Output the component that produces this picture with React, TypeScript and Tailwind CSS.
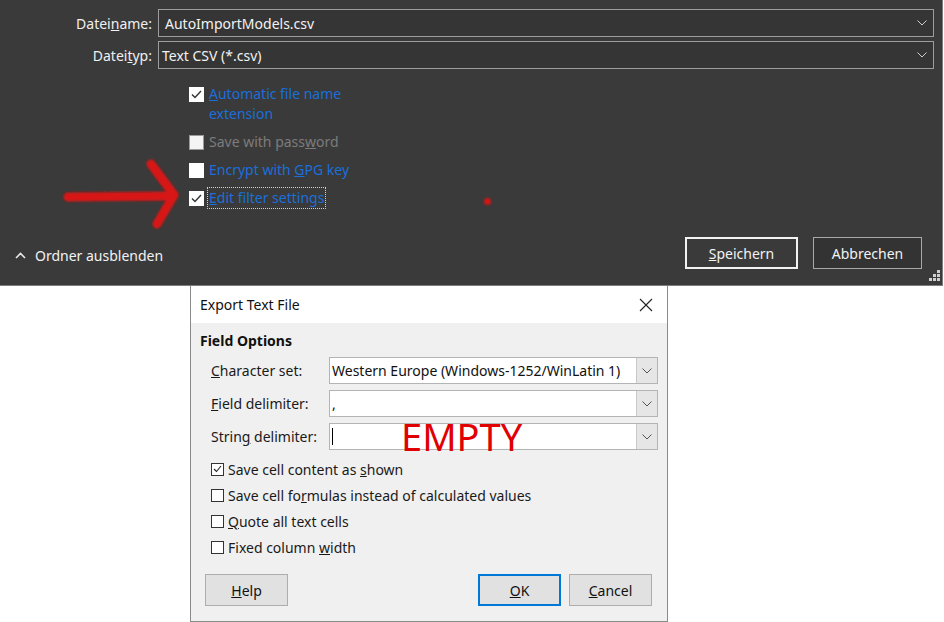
import React from 'react';

const font = { fontFamily: '"Noto Sans", "Liberation Sans", sans-serif' };

function Chevron({ className }: { className?: string }) {
  return (
    <svg width="10" height="6" viewBox="0 0 10 6" className={className}>
      <path d="M0.5 0.5 L5 5 L9.5 0.5" fill="none" stroke="currentColor" strokeWidth="1" />
    </svg>
  );
}

function DarkCheck({ checked, disabled }: { checked?: boolean; disabled?: boolean }) {
  return (
    <span
      className={`mt-[3px] flex h-[15px] w-[15px] shrink-0 items-center justify-center ${
        disabled ? 'border border-[#9a9a9a] bg-[#f4f4f4]' : 'bg-white'
      }`}
    >
      {checked && (
        <svg width="11" height="9" viewBox="0 0 11 9">
          <path d="M1 4.5 L4 7.5 L10 1" fill="none" stroke="#333" strokeWidth="1.4" />
        </svg>
      )}
    </span>
  );
}

function DarkField({ label, value, textPad }: { label: [string, string, string]; value: string; textPad: string }) {
  return (
    <div className="flex items-center">
      <div className="w-[158px] pr-[6px] text-right text-[14px] text-[#f0f0f0]">
        {label[0]}
        <u>{label[1]}</u>
        {label[2]}:
      </div>
      <div className="mr-[8px] flex h-[28px] flex-1 items-center border border-[#9d9d9d] bg-[#353535]">
        <span className={`${textPad} flex-1 text-[14px] text-[#f2f2f2]`}>{value}</span>
        <Chevron className="mr-[6px] text-[#cfcfcf]" />
      </div>
    </div>
  );
}

function DlgCheck({ checked, children }: { checked?: boolean; children: React.ReactNode }) {
  return (
    <div className="flex h-[26px] items-center gap-[4px] text-[14px] text-[#1a1a1a]">
      <span className="flex h-[13px] w-[13px] items-center justify-center border border-[#333] bg-white">
        {checked && (
          <svg width="9" height="8" viewBox="0 0 9 8">
            <path d="M1 4 L3.5 6.5 L8 1" fill="none" stroke="#222" strokeWidth="1.1" />
          </svg>
        )}
      </span>
      <span>{children}</span>
    </div>
  );
}

function Combo({ label, value, cursor }: { label: React.ReactNode; value?: string; cursor?: boolean }) {
  return (
    <div className="flex items-center">
      <div className="w-[129px] shrink-0 whitespace-nowrap pl-[11px] text-[14px] text-[#1a1a1a]">{label}</div>
      <div className="flex h-[27px] w-[329px] items-stretch border border-[#b4b4b4] bg-white">
        <div className="relative flex flex-1 items-center pl-[2px] text-[14px] text-[#111]">
          {value}
          {cursor && <span className="h-[17px] w-px bg-black" />}
        </div>
        <div className="flex w-[21px] items-center justify-center border-l border-[#c8c8c8] bg-[#e6e6e6]">
          <Chevron className="text-[#555]" />
        </div>
      </div>
    </div>
  );
}

function DlgButton({ children, primary }: { children: React.ReactNode; primary?: boolean }) {
  return (
    <div
      className={`flex h-[32px] w-[83px] items-center justify-center bg-[#e1e1e1] text-[14px] text-[#111] ${
        primary ? 'border-2 border-[#0078d7]' : 'border border-[#adadad]'
      }`}
    >
      {children}
    </div>
  );
}

export default function App() {
  return (
    <div className="relative h-[622px] w-[944px] overflow-hidden bg-white" style={font}>
      {/* Save dialog (dark) */}
      <div className="flex h-[286px] w-[943px] flex-col border-b border-r border-[#7d7d7d] bg-[#3a3a3a]">
        <div className="flex flex-col gap-[4px] pt-[9px]">
          <DarkField label={['Datei', 'n', 'ame']} value="AutoImportModels.csv" textPad="pl-[6px]" />
          <DarkField label={['Datei', 't', 'yp']} value="Text CSV (*.csv)" textPad="pl-[3px]" />
        </div>

        <div className="mt-[15px] flex flex-col gap-[8px] pl-[189px] text-[14px] leading-[20px]">
          <div className="flex items-start gap-[5px]">
            <DarkCheck checked />
            <span className="w-[140px] text-[#1b6fd9]">
              <u>A</u>utomatic file name extension
            </span>
          </div>
          <div className="flex items-start gap-[5px]">
            <DarkCheck disabled />
            <span className="text-[#7c7c7c]">
              Save with pass<u>w</u>ord
            </span>
          </div>
          <div className="flex items-start gap-[5px]">
            <DarkCheck />
            <span className="text-[#1b6fd9]">
              Encrypt with <u>G</u>PG key
            </span>
          </div>
          <div className="flex items-start gap-[4px]">
            <DarkCheck checked />
            <span className="px-px text-[#1b6fd9] outline-1 outline-dotted outline-[#d0d0d0]">
              <u>E</u>dit filter settings
            </span>
          </div>
        </div>

        <div className="mt-auto flex items-center pb-[16px] pl-[15px] pr-[20px]">
          <svg width="11" height="7" viewBox="0 0 11 7" className="mt-[4px]">
            <path d="M1 6 L5.5 1.5 L10 6" fill="none" stroke="#e8e8e8" strokeWidth="1.6" />
          </svg>
          <span className="ml-[9px] mt-[5px] text-[14px] text-[#f2f2f2]">Ordner ausblenden</span>
          <div className="ml-auto flex gap-[15px]">
            <div className="flex h-[32px] w-[113px] items-center justify-center border-2 border-[#f2f2f2] text-[14px] text-[#f2f2f2]">
              <span>
                <u>S</u>peichern
              </span>
            </div>
            <div className="flex h-[32px] w-[109px] items-center justify-center border border-[#a8a8a8] bg-[#333] text-[14px] text-[#f2f2f2]">
              Abbrechen
            </div>
          </div>
        </div>
      </div>

      {/* resize grip */}
      <svg className="absolute left-[929px] top-[270px]" width="12" height="12" viewBox="0 0 12 12">
        {[
          [8, 0],
          [4, 4],
          [8, 4],
          [0, 8],
          [4, 8],
          [8, 8],
        ].map(([x, y]) => (
          <rect key={`${x}-${y}`} x={x} y={y} width="3" height="3" fill="#cfcfcf" />
        ))}
      </svg>

      {/* red annotation arrow */}
      <svg className="absolute left-0 top-[150px]" width="200" height="90" viewBox="0 0 200 90">
        <defs>
          <filter id="soft" x="-10%" y="-10%" width="120%" height="120%">
            <feGaussianBlur stdDeviation="0.9" />
          </filter>
        </defs>
        <g stroke="#d81414" strokeWidth="9" strokeLinecap="round" fill="none" filter="url(#soft)">
          <path d="M68 47 L173 46" />
          <path d="M151 14 L174 45 L157 74" strokeLinejoin="round" />
        </g>
      </svg>
      <span className="absolute left-[484px] top-[198px] h-[7px] w-[7px] rounded-full bg-[#d81414] blur-[1px]" />

      {/* Export Text File dialog */}
      <div className="ml-[190px] flex h-[336px] w-[478px] flex-col border-x border-b border-[#8a8a8a] bg-[#f0f0f0]">
        <div className="flex h-[37px] items-center justify-between bg-white pl-[9px] pr-[14px]">
          <span className="text-[14px] text-[#111]">Export Text File</span>
          <svg width="14" height="14" viewBox="0 0 14 14">
            <path d="M1 1 L13 13 M13 1 L1 13" stroke="#222" strokeWidth="1.1" />
          </svg>
        </div>
        <div className="pl-[9px] pt-[7px]">
          <div className="text-[14px] font-bold text-[#111]">Field Options</div>
          <div className="relative mt-[6px] flex flex-col gap-[6px]">
            <Combo
              label={
                <>
                  <u>C</u>haracter set:
                </>
              }
              value="Western Europe (Windows-1252/WinLatin 1)"
            />
            <Combo
              label={
                <>
                  <u>F</u>ield delimiter:
                </>
              }
              value=","
            />
            <Combo
              label={
                <>
                  Strin<u>g</u> delimiter:
                </>
              }
              cursor
            />
            <span className="pointer-events-none absolute left-[201px] top-[57px] text-[38px] leading-[44px] text-[#e00000]">
              EMPTY
            </span>
          </div>
          <div className="mt-[6px] flex flex-col pl-[11px]">
            <DlgCheck checked>
              Save cell content as <u>s</u>hown
            </DlgCheck>
            <DlgCheck>
              Save cell fo<u>r</u>mulas instead of calculated values
            </DlgCheck>
            <DlgCheck>
              <u>Q</u>uote all text cells
            </DlgCheck>
            <DlgCheck>
              Fixed column <u>w</u>idth
            </DlgCheck>
          </div>
        </div>
        <div className="mt-auto flex items-center pb-[15px] pl-[14px] pr-[15px]">
          <DlgButton>
            <u>H</u>elp
          </DlgButton>
          <div className="ml-auto flex gap-[8px]">
            <DlgButton primary>
              <u>O</u>K
            </DlgButton>
            <DlgButton>
              <u>C</u>ancel
            </DlgButton>
          </div>
        </div>
      </div>
    </div>
  );
}
